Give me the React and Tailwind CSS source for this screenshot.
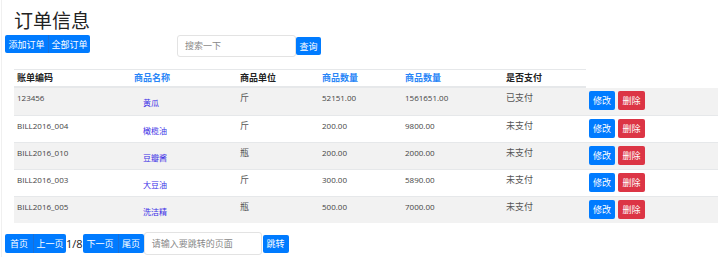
import React from "react";

const rows = [
  ["123456", "黄瓜", "斤", "52151.00", "1561651.00", "已支付"],
  ["BILL2016_004", "橄榄油", "斤", "200.00", "9800.00", "未支付"],
  ["BILL2016_010", "豆瓣酱", "瓶", "200.00", "2000.00", "未支付"],
  ["BILL2016_003", "大豆油", "斤", "300.00", "5890.00", "未支付"],
  ["BILL2016_005", "洗洁精", "瓶", "500.00", "7000.00", "未支付"],
];

const font = { fontFamily: '"Open Sans","Noto Sans CJK SC",sans-serif' };

function Btn({ children, className = "" }) {
  return (
    <button
      className={
        "flex items-center justify-center text-white text-[9px] leading-none rounded-[2px] " +
        className
      }
    >
      {children}
    </button>
  );
}

export default function App() {
  return (
    <div style={font} className="w-[720px] h-[257px] bg-white overflow-hidden">
      <div className="ml-[1px] border-l border-[#f0f0f0] h-full">
        <h1 className="ml-[12px] pt-[8px] text-[19px] leading-[27px] text-[#222] font-normal">
          订单信息
        </h1>
        <div className="flex items-start">
          <div className="ml-[3px] flex">
            <Btn className="w-[43px] h-[18px] bg-[#007bff] rounded-r-none">添加订单</Btn>
            <Btn className="w-[42px] h-[18px] bg-[#007bff] rounded-l-none border-l border-[#1a6fd6]">全部订单</Btn>
          </div>
          <div className="ml-[87px] flex items-center">
            <div className="w-[119px] h-[22px] border border-[#e3e3e3] rounded-[3px] flex items-center pl-[7px] text-[9px] text-[#888]">
              搜索一下
            </div>
            <Btn className="w-[25px] h-[18px] bg-[#007bff]">查询</Btn>
          </div>
        </div>

        <div className="ml-[12px] mt-[12px] w-[704px]">
          <div className="flex w-[572px] h-[19px] border-t border-b-2 border-[#e6e8ea] items-center text-[9px] font-bold">
            <div className="w-[117px] pl-[3px] text-[#222]">账单编码</div>
            <div className="w-[106px] pl-[3px] text-[#2a86f7]">商品名称</div>
            <div className="w-[82px] pl-[3px] text-[#222]">商品单位</div>
            <div className="w-[83px] pl-[3px] text-[#2a86f7]">商品数量</div>
            <div className="w-[101px] pl-[3px] text-[#2a86f7]">商品数量</div>
            <div className="w-[83px] pl-[3px] text-[#222]">是否支付</div>
          </div>
          {rows.map((r, i) => (
            <div
              key={i}
              className={
                "grid grid-cols-[117px_106px_82px_83px_101px_83px_132px] h-[27px] text-[8px] text-[#444] " +
                (i % 2 === 0 ? "bg-[#f2f2f2] " : "bg-white ") +
                (i > 0 ? "border-t border-[#e6e8ea]" : "")
              }
            >
              <div className="pl-[3px] pt-[4px] leading-[11px]">{r[0]}</div>
              <div className="pl-[12px] pt-[9px] leading-[11px] text-[#3b2fe6]">{r[1]}</div>
              <div className="pl-[3px] pt-[4px] leading-[11px] text-[9px] text-[#555]">{r[2]}</div>
              <div className="pl-[3px] pt-[4px] leading-[11px]">{r[3]}</div>
              <div className="pl-[3px] pt-[4px] leading-[11px]">{r[4]}</div>
              <div className="pl-[3px] pt-[4px] leading-[11px] text-[9px] text-[#555]">{r[5]}</div>
              <div className="pl-[3px] pt-[3px] flex gap-[3px] items-start">
                <Btn className="w-[26px] h-[19px] bg-[#007bff]">修改</Btn>
                <Btn className="w-[27px] h-[19px] bg-[#dc3545]">删除</Btn>
              </div>
            </div>
          ))}
        </div>

        <div className="mt-[9px] ml-[3px] flex items-center">
          <div className="flex">
            <Btn className="w-[28px] h-[19px] bg-[#007bff] rounded-r-none">首页</Btn>
            <Btn className="w-[33px] h-[19px] bg-[#007bff] rounded-l-none border-l border-[#1a6fd6]">上一页</Btn>
          </div>
          <span className="text-[11px] text-[#222] leading-none">1/8</span>
          <div className="flex">
            <Btn className="w-[35px] h-[19px] bg-[#007bff] rounded-r-none">下一页</Btn>
            <Btn className="w-[26px] h-[19px] bg-[#007bff] rounded-l-none border-l border-[#1a6fd6]">尾页</Btn>
          </div>
          <div className="w-[118px] h-[23px] border border-[#e3e3e3] rounded-[3px] flex items-center pl-[7px] text-[9px] text-[#888]">
            请输入要跳转的页面
          </div>
          <Btn className="ml-[1px] w-[26px] h-[18px] bg-[#007bff]">跳转</Btn>
        </div>
      </div>
    </div>
  );
}
